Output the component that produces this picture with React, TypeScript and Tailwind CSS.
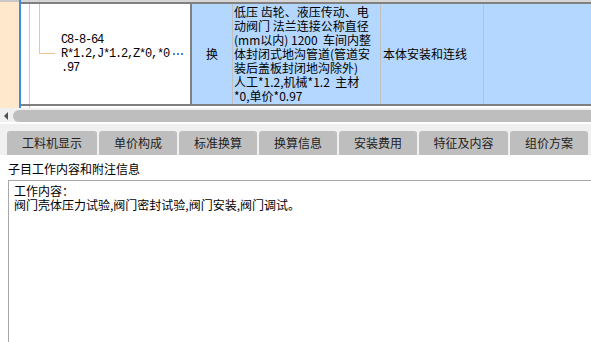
import React from 'react';

const cjk = "font-['Noto_Sans_CJK_SC','Noto_Sans',sans-serif]";

const tabs = [
    { label: '工料机显示', w: 'w-[90px]' },
    { label: '单价构成', w: 'w-[78px]' },
    { label: '标准换算', w: 'w-[78px]' },
    { label: '换算信息', w: 'w-[78px]' },
    { label: '安装费用', w: 'w-[78px]' },
    { label: '特征及内容', w: 'w-[89px]' },
    { label: '组价方案', w: 'w-[78px]' },
];

const descLines = [
    '低压 齿轮、液压传动、电',
    '动阀门 法兰连接公称直径',
    '(mm以内) 1200  车间内整',
    '体封闭式地沟管道(管道安',
    '装后盖板封闭地沟除外)',
    '人工*1.2,机械*1.2  主材',
    '*0,单价*0.97',
];

function GridRow() {
    return (
        <div className="flex h-[108px]">
            {/* row header strip */}
            <div className="w-[19px] flex flex-col">
                <div className="h-[2px] bg-[#c8c8c8]" />
                <div className="flex-1 bg-[#ffe8cc]" />
            </div>
            <div className="w-[2px] bg-[#3c8ce6]" />

            <div className="flex-1 flex flex-col">
                <div className="h-[2px] bg-[#d6d6d6] relative">
                    <div className="absolute left-[8px] top-0 w-px h-full bg-[#f5c48c]" />
                    <div className="absolute left-[18px] top-0 w-px h-full bg-[#f5c48c]" />
                </div>

                <div className="h-[104px] flex border-y-2 border-[#808080]">
                    {/* code cell */}
                    <div className="w-[171px] bg-white border-r-2 border-[#808080] relative flex items-center">
                        <div className="absolute left-[8px] top-0 w-px h-full bg-[#f5c48c]" />
                        <div className="absolute left-[18px] top-0 w-px h-[50px] bg-[#f5c48c]" />
                        <div className="absolute left-[18px] top-[49px] w-[16px] h-px bg-[#f5c48c]" />
                        <div className="pl-[40px] font-['Liberation_Mono',monospace] text-[12px] tracking-[-1.2px] leading-[14px] text-black">
                            <div>C8-8-64</div>
                            <div className="flex items-center">
                                <span>R*1.2,J*1.2,Z*0,*0</span>
                                <span className="ml-[4px] flex gap-[2px]">
                                    <span className="w-[2px] h-[2px] bg-[#3c8ce6]" />
                                    <span className="w-[2px] h-[2px] bg-[#3c8ce6]" />
                                    <span className="w-[2px] h-[2px] bg-[#3c8ce6]" />
                                </span>
                            </div>
                            <div>.97</div>
                        </div>
                    </div>

                    <div className={`w-[41px] bg-[#b3d7ff] border-r border-[#c0c0c0] flex items-center justify-center text-[12px] text-black ${cjk}`}>
                        换
                    </div>

                    <div className={`w-[148px] bg-[#b3d7ff] border-r border-[#c0c0c0] flex flex-col justify-center pl-[1px] text-[12px] leading-[14px] text-black ${cjk}`}>
                        {descLines.map((l, i) => (
                            <div key={i} className="whitespace-pre">{l}</div>
                        ))}
                    </div>

                    <div className={`w-[103px] bg-[#b3d7ff] border-r border-[#c0c0c0] flex items-center pl-[2px] text-[12px] text-black ${cjk}`}>
                        本体安装和连线
                    </div>

                    <div className="flex-1 bg-[#b3d7ff]" />
                </div>

                <div className="h-[2px] bg-white relative">
                    <div className="absolute left-[8px] top-0 w-px h-full bg-[#f5c48c]" />
                </div>
            </div>
        </div>
    );
}

export default function App() {
    return (
        <div className={`w-[591px] h-[342px] overflow-hidden bg-white flex flex-col ${cjk}`}>
            <GridRow />

            {/* horizontal scrollbar */}
            <div className="h-[14px] bg-[#f0f0f0] flex items-end">
                <div className="w-[13px] h-[12px] flex items-center pl-[4px]">
                    <div className="w-0 h-0 border-y-[4px] border-y-transparent border-r-[4px] border-r-[#505050]" />
                </div>
                <div className="flex-1 h-[12px] bg-[#bebebe] rounded-l-[6px]" />
            </div>
            <div className="h-[2px] bg-white" />

            {/* tabs */}
            <div className="bg-[#f0f0f0] pt-[7px] pl-[7px] flex gap-[2px]">
                {tabs.map((t) => (
                    <div
                        key={t.label}
                        className={`${t.w} h-[24px] bg-[#bebebe] rounded-t-[3px] flex items-center justify-center text-[12px] text-[#222]`}
                    >
                        {t.label}
                    </div>
                ))}
            </div>

            <div className="h-[25px] pt-[6px] pl-[8px] text-[12px] leading-[15px] text-black">
                子目工作内容和附注信息
            </div>

            <div className="flex-1 ml-[8px] border-t border-l border-[#a8a8a8] pt-[3px] pl-[5px] text-[12px] leading-[14px] text-black">
                <div>工作内容：</div>
                <div>阀门壳体压力试验,阀门密封试验,阀门安装,阀门调试。</div>
            </div>
        </div>
    );
}
